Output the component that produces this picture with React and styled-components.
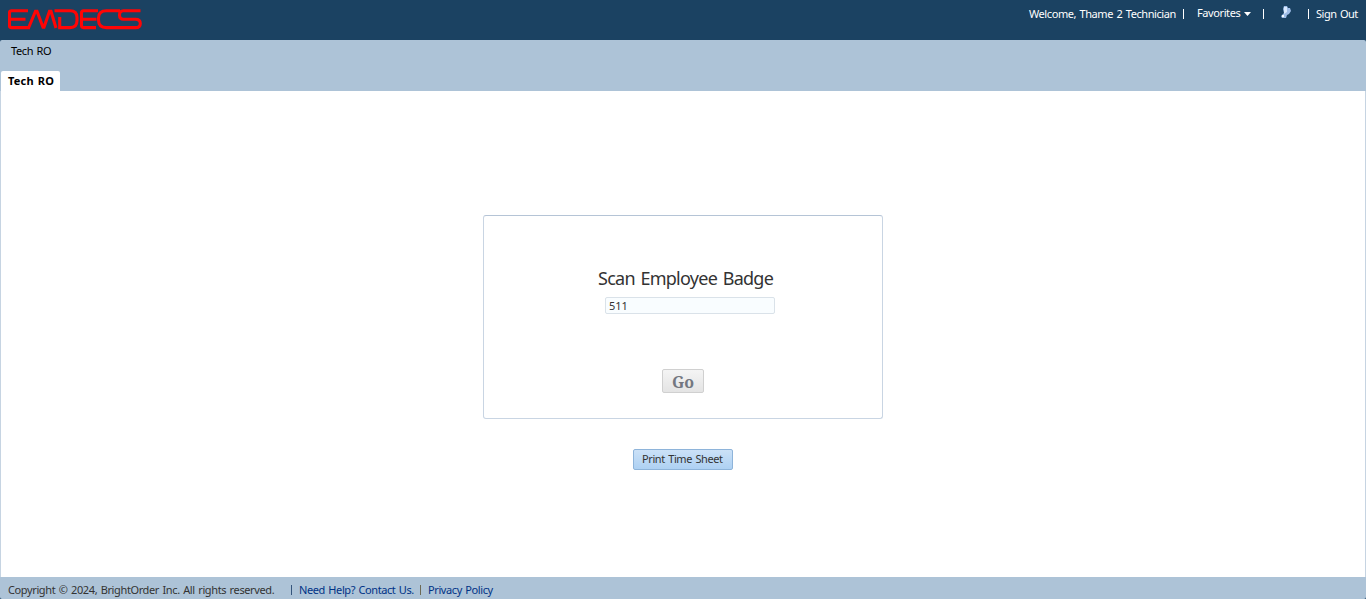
import React from "react";
import styled, { createGlobalStyle } from "styled-components";

const GlobalStyle = createGlobalStyle`
  * { box-sizing: border-box; }
  body { margin: 0; background: #1b4262; font: 11px/14px "Noto Sans", Tahoma, sans-serif; color: #333; }
`;

const Page = styled.div`
  display: flex;
  flex-direction: column;
  height: 599px;
  width: 100%;
  overflow: hidden;
`;

const Header = styled.header`
  display: flex;
  justify-content: space-between;
  height: 40px;
  padding: 8px 8px 0;
  background: #1b4262;
`;

const Logo = styled.svg`
  display: block;
  width: 134px;
  height: 22px;
`;

const UserMenu = styled.nav`
  display: flex;
  height: 14px;
  margin-top: -1px;
  color: #fff;
  white-space: nowrap;
`;

const Label = styled.span`
  display: block;
  white-space: nowrap;
  flex: none;
  width: ${(p) => p.$width}px;
  letter-spacing: ${(p) => p.$tracking || 0}px;
  word-spacing: 1px;
`;

const Divider = styled.span`
  flex: none;
  width: 1px;
  height: 10px;
  margin: 2px ${(p) => p.$after}px 0 ${(p) => p.$before}px;
  background: ${(p) => p.$color || "#fff"};
`;

const Favorites = styled.span`
  display: flex;
  margin-top: -1px;
`;

const Caret = styled.svg`
  width: 7px;
  height: 4px;
  margin: 6px 0 0 3px;
`;

const StatusIcon = styled.svg`
  width: 10px;
  height: 13px;
  margin-top: -1px;
`;

const NavArea = styled.div`
  display: flex;
  flex-direction: column;
  justify-content: space-between;
  height: 51px;
  background: #adc3d7;
  border-radius: 2px 2px 0 0;
`;

const Crumb = styled.div`
  padding: 4px 0 0 11px;
  color: #000;
`;

const Tab = styled.div`
  width: 59px;
  height: 20px;
  margin-left: 1px;
  padding: 3px 0 0 7px;
  background: #fff;
  border-radius: 2px 2px 0 0;
  color: #000;
  font-weight: 700;
`;

const Content = styled.main`
  flex: 1;
  display: flex;
  flex-direction: column;
  align-items: center;
  padding-top: 124px;
  background: #fff;
  border: solid #c6d4e2;
  border-width: 0 1px;
`;

const Panel = styled.section`
  display: flex;
  flex-direction: column;
  align-items: center;
  width: 400px;
  height: 204px;
  padding-top: 50px;
  border: 1px solid #c9d5e3;
  border-top-color: #b5c4d6;
  border-radius: 3px;
`;

const Title = styled.h1`
  width: 176px;
  margin: 0 0 0 6px;
  font-size: 18px;
  line-height: 24px;
  font-weight: 400;
  white-space: nowrap;
  letter-spacing: -0.74px;
  word-spacing: 1.7px;
`;

const BadgeInput = styled.input`
  width: 170px;
  height: 17px;
  margin: 7px 0 0 14px;
  padding: 0 3px 1px;
  border: 1px solid #dae2e9;
  border-radius: 2px;
  background: #f9fdff;
  color: #333;
  font: inherit;
  outline: none;
`;

const GoButton = styled.button`
  width: 42px;
  height: 24px;
  margin-top: 55px;
  padding: 1px 0 0;
  border: 1px solid #d0d0d0;
  border-radius: 2px;
  background: linear-gradient(#f4f4f4, #e4e4e4);
  color: #737780;
  font: 700 16px/20px "Noto Serif", "DejaVu Serif", serif;
  font-stretch: condensed;
`;

const PrintButton = styled.button`
  display: flex;
  width: 100px;
  height: 21px;
  margin-top: 30px;
  padding: 2px 0 0 8px;
  border: 1px solid #8eb4da;
  border-radius: 2px;
  background: linear-gradient(#cbe1f7, #aed1f3);
  color: #333;
  font: inherit;
  text-align: left;
`;

const Footer = styled.footer`
  display: flex;
  height: 22px;
  padding: 6px 0 0 8px;
  background: #adc3d7;
  border-radius: 0 0 2px 2px;
`;

const FooterLink = styled(Label)`
  color: #003286;
`;

export default function App() {
  return (
    <Page>
      <GlobalStyle />
      <Header>
        <Logo viewBox="0 0 134 22" fill="none" stroke="#ff0505" strokeWidth="3.1">
          <path d="M20 2.7H3.5Q1.5 2.7 1.5 4.7V17.6Q1.5 19.6 3.5 19.6H22M1.5 11.2H17.5" />
          <path d="M20.5 20L27.5 3.2H29L35 19.3H36L41.5 3.2H43L48 20" />
          <path d="M46.5 2.7H62Q69 2.7 69 9.5V12.5Q69 19.6 62 19.6H51.7V9" />
          <path d="M90 2.7H75.5Q73.5 2.7 73.5 4.7V17.6Q73.5 19.6 75.5 19.6H88M73.5 11.2H88.5" />
          <path d="M112 2.7H98.5Q90.5 2.7 90.5 10V12Q90.5 19.6 98.5 19.6H127.5Q132.3 19.6 132.3 15.4Q132.3 11.2 127.5 11.2H115.5Q111.5 11.2 111.5 7Q111.5 2.7 115.5 2.7H132.5" />
        </Logo>
        <UserMenu>
          <Label $width={147} $tracking={-0.42}>Welcome, Thame 2 Technician</Label>
          <Divider $before={7} $after={13} />
          <Favorites>
            <Label $width={44} $tracking={-0.4}>Favorites</Label>
            <Caret viewBox="0 0 7 4"><path d="M0 0H7L3.5 4Z" fill="#fff" /></Caret>
          </Favorites>
          <Divider $before={12} $after={17} />
          <StatusIcon viewBox="0 0 10 13">
            <path d="M3 0H6L7 2L9 2L10 5L8 8L6 9L5 12L1 12L0 10L3 7L2 3Z" fill="#9fbde8" />
            <path d="M3 1H6V6L3 8Z" fill="#d9e9ff" />
            <path d="M1 9H3V11H1Z" fill="#f5fbff" />
          </StatusIcon>
          <Divider $before={17} $after={7} />
          <Label $width={42} $tracking={-0.48}>Sign Out</Label>
        </UserMenu>
      </Header>
      <NavArea>
        <Crumb><Label $width={41} $tracking={-0.38}>Tech RO</Label></Crumb>
        <Tab><Label $width={46} $tracking={0.2}>Tech RO</Label></Tab>
      </NavArea>
      <Content>
        <Panel>
          <Title>Scan Employee Badge</Title>
          <BadgeInput defaultValue="511" />
          <GoButton>Go</GoButton>
        </Panel>
        <PrintButton><Label $width={82} $tracking={-0.41}>Print Time Sheet</Label></PrintButton>
      </Content>
      <Footer>
        <Label $width={267} $tracking={-0.38}>Copyright © 2024, BrightOrder Inc. All rights reserved.</Label>
        <Divider $before={16} $after={7} $color="#35557c" />
        <FooterLink $width={115} $tracking={-0.41}>Need Help? Contact Us.</FooterLink>
        <Divider $before={6} $after={7} $color="#6d6a55" />
        <FooterLink $width={66} $tracking={-0.4}>Privacy Policy</FooterLink>
      </Footer>
    </Page>
  );
}
